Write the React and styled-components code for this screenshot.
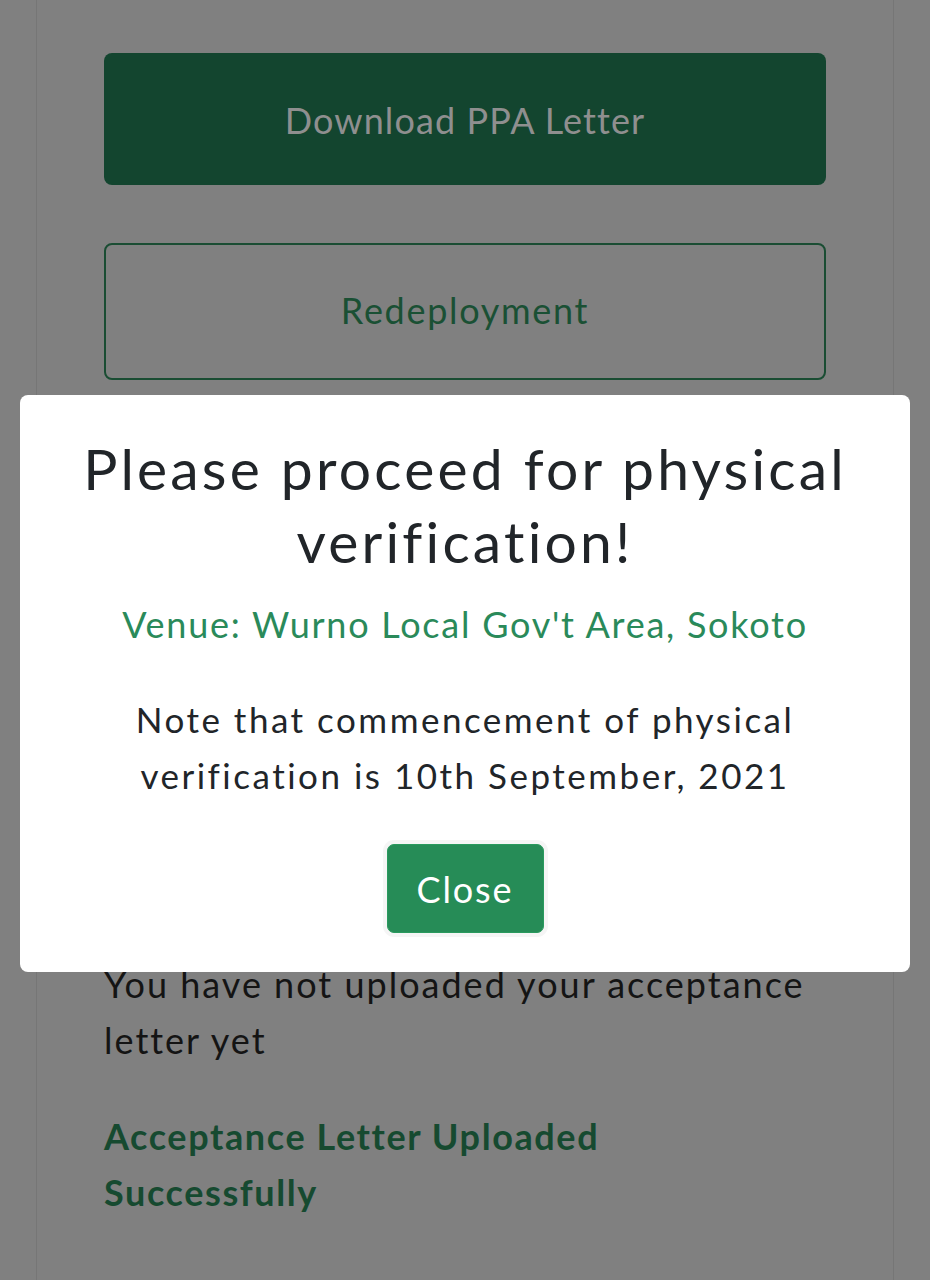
import React from "react";
import styled, { createGlobalStyle } from "styled-components";

const GlobalStyle = createGlobalStyle`
  html, body {
    margin: 0;
    padding: 0;
    background: #808080;
    font-family: Lato, "Open Sans", sans-serif;
  }
`;

const Page = styled.div`
  position: relative;
  height: 1280px;
  overflow: hidden;
  background: #808080;
`;

const Card = styled.div`
  margin: 0 36px;
  height: 100%;
  box-sizing: border-box;
  border-left: 1px solid #767676;
  border-right: 1px solid #767676;
  padding: 53px 67px 0;
  display: flex;
  flex-direction: column;
`;

const ActionButton = styled.button`
  display: flex;
  align-items: center;
  justify-content: center;
  width: 100%;
  height: ${(p) => (p.$outline ? "137px" : "132px")};
  margin-bottom: ${(p) => p.$gap || 0}px;
  box-sizing: border-box;
  border-radius: 8px;
  font-family: inherit;
  font-size: 36px;
  letter-spacing: ${(p) => (p.$outline ? "1.7px" : "1.1px")};
  padding-bottom: ${(p) => (p.$outline ? "4px" : "0")};
  background: ${(p) => (p.$outline ? "transparent" : "#13452f")};
  color: ${(p) => (p.$outline ? "#1a5034" : "#8f8f8f")};
  border: ${(p) => (p.$outline ? "2px solid #1a4d33" : "none")};
`;

const Status = styled.p`
  margin: 0;
  font-size: 36px;
  line-height: 56px;
  letter-spacing: ${(p) => (p.$success ? "1.6px" : "2px")};
  color: ${(p) => (p.$success ? "#164a30" : "#141414")};
  font-weight: ${(p) => (p.$success ? 700 : 400)};
  margin-top: ${(p) => p.$top || 0}px;
`;

const Modal = styled.div`
  position: absolute;
  top: 395px;
  left: 20px;
  width: 890px;
  height: 577px;
  box-sizing: border-box;
  background: #fff;
  border-radius: 8px;
  padding: 37px 30px 0;
  display: flex;
  flex-direction: column;
  align-items: center;
  text-align: center;
`;

const Title = styled.h2`
  margin: 0;
  font-size: 57px;
  font-weight: 400;
  line-height: 73px;
  letter-spacing: 3.2px;
  color: #212529;
`;

const Venue = styled.p`
  margin: 22px 0 0;
  font-size: 36px;
  line-height: 48px;
  letter-spacing: 1.75px;
  color: #2a8a5a;
`;

const Note = styled.p`
  margin: 43px 0 0;
  font-size: 35px;
  line-height: 56px;
  letter-spacing: 2.5px;
  color: #212529;
`;

const CloseButton = styled.button`
  margin-top: 41px;
  width: 157px;
  height: 89px;
  border-radius: 7px;
  border: 1px solid #2a9a5e;
  background: #268c57;
  color: #fff;
  font-family: inherit;
  font-size: 36px;
  letter-spacing: 1.9px;
  box-shadow: 0 0 0 4px rgba(230, 230, 230, 0.4);
`;

export default function App() {
  return (
    <Page>
      <GlobalStyle />
      <Card>
        <ActionButton $gap={58}>Download PPA Letter</ActionButton>
        <ActionButton $outline>Redeployment</ActionButton>
        <Status $top={576}>
          You have not uploaded your acceptance letter yet
        </Status>
        <Status $success $top={40}>
          Acceptance Letter Uploaded
          <br />
          Successfully
        </Status>
      </Card>
      <Modal>
        <Title>Please proceed for physical verification!</Title>
        <Venue>Venue: Wurno Local Gov't Area, Sokoto</Venue>
        <Note>
          Note that commencement of physical
          <br />
          verification is 10th September, 2021
        </Note>
        <CloseButton>Close</CloseButton>
      </Modal>
    </Page>
  );
}
